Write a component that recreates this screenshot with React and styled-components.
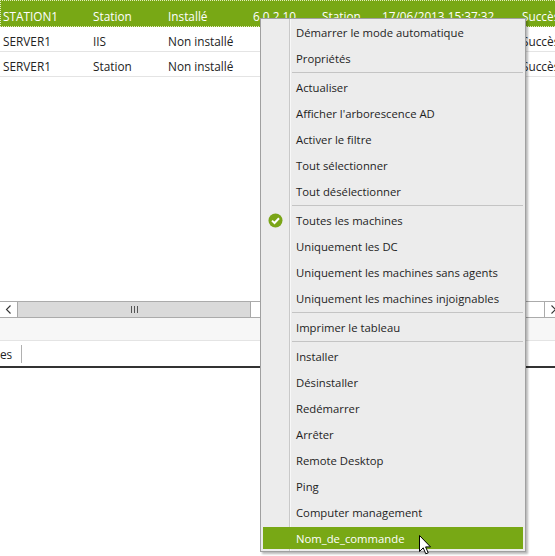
import React from "react";
import styled, { createGlobalStyle } from "styled-components";

const Global = createGlobalStyle`
  html, body { margin: 0; padding: 0; background: #fff; }
  body { font-family: "Open Sans", "Noto Sans", sans-serif; }
`;

const GREEN = "#78a815";

const Page = styled.div`
  position: relative;
  width: 555px;
  height: 556px;
  overflow: hidden;
  background: #fff;
  font-family: "Open Sans", "Noto Sans", sans-serif;
  font-size: 11.8px;
  color: #222;
`;

const Wide = styled.div`
  width: 561px;
`;

const RowsArea = styled.div`
  height: 301px;
`;

const Row = styled.div`
  display: grid;
  grid-template-columns: 90px 75px 85px 69px 60px 140px 1fr;
  height: ${(p) => (p.$first ? 27 : 25)}px;
  padding-top: ${(p) => (p.$first ? 2 : 0)}px;
  box-sizing: border-box;
  align-items: center;
  background: ${(p) => (p.$selected ? GREEN : "#fff")};
  color: ${(p) => (p.$selected ? "#fff" : "#222")};
  border-bottom: 1px solid ${(p) => (p.$selected ? GREEN : "#e4e4e4")};
  outline: ${(p) => (p.$selected ? "1px dotted rgba(255,255,230,0.8)" : "none")};
  outline-offset: -1px;
`;

const Cell = styled.div`
  padding-left: 3px;
  padding-top: 3px;
  white-space: nowrap;
  overflow: hidden;
`;

const HScroll = styled.div`
  display: flex;
  height: 17px;
  box-sizing: border-box;
  border-top: 1px solid #ababab;
  border-bottom: 1px solid #ababab;
  background: #fff;
`;

const ArrowBtn = styled.div`
  width: 17px;
  flex: none;
  display: flex;
  align-items: center;
  justify-content: center;
  background: #fff;
  border-left: ${(p) => (p.$right ? "1px solid #ababab" : "none")};
  box-sizing: border-box;
`;

const Thumb = styled.div`
  width: 234px;
  flex: none;
  background: #dadada;
  border: 1px solid #a8a8a8;
  border-top: none;
  border-bottom: none;
  box-sizing: border-box;
  display: flex;
  align-items: center;
  justify-content: center;
`;

const Track = styled.div`
  flex: 1;
`;

const Strip = styled.div`
  height: 22px;
  background: #f7f7f7;
  border-bottom: 1px solid #e4e4e4;
`;

const TabBar = styled.div`
  height: 25px;
  display: flex;
  align-items: center;
  border-bottom: 2px solid #333;
`;

const TabLabel = styled.div`
  padding-right: 9px;
  height: 18px;
  line-height: 18px;
  border-right: 1px solid #b0b0b0;
`;

const Menu = styled.div`
  position: absolute;
  left: 260px;
  top: 18px;
  width: 266px;
  box-sizing: border-box;
  display: flex;
  flex-direction: column;
  border: 1px solid #a0a0a0;
  padding: 0 2px;
  font-size: 11.3px;
  background:
    linear-gradient(
      to right,
      transparent 28px,
      #c9c9c9 28px,
      #c9c9c9 29px,
      #f8f8f8 29px,
      #f8f8f8 30px,
      transparent 30px
    ),
    #ececec;
  box-shadow: 2px 2px 2px rgba(0, 0, 0, 0.28);
  color: #1e1e1e;
`;

const Item = styled.div`
  position: relative;
  display: flex;
  align-items: center;
  height: 22px;
  flex: none;
  margin: 2px 0;
  background: ${(p) => (p.$active ? GREEN : "transparent")};
  color: ${(p) => (p.$active ? "#fff" : "#1e1e1e")};
  white-space: nowrap;
`;

const IconSlot = styled.span`
  width: 24px;
  flex: none;
  display: flex;
  align-items: center;
  justify-content: center;
  margin-right: 9px;
`;

const Sep = styled.div`
  height: 1px;
  flex: none;
  margin: 1px 0 1px 29px;
  background: #c4c4c4;
`;

const Cursor = styled.svg`
  position: absolute;
  left: 156px;
  top: 8px;
`;

const CheckIcon = () => (
  <svg width="15" height="15" viewBox="0 0 15 15">
    <circle cx="7.5" cy="7.5" r="7" fill="#7aa517" />
    <path d="M4 7.6 L6.5 10 L11 5.2" fill="none" stroke="#fff" strokeWidth="2" />
  </svg>
);

const Chevron = ({ right }) => (
  <svg width="7" height="9" viewBox="0 0 7 9">
    <path
      d={right ? "M1.5 0.5 L5.5 4.5 L1.5 8.5" : "M5.5 0.5 L1.5 4.5 L5.5 8.5"}
      fill="none"
      stroke="#333"
      strokeWidth="1.1"
    />
  </svg>
);

const Grip = () => (
  <svg width="7" height="7" viewBox="0 0 7 7">
    <rect x="0" y="0" width="1" height="7" fill="#555" />
    <rect x="3" y="0" width="1" height="7" fill="#555" />
    <rect x="6" y="0" width="1" height="7" fill="#555" />
  </svg>
);

const rows = [
  ["STATION1", "Station", "Installé", "6.0.2.10", "Station", "17/06/2013 15:37:32", "Succès"],
  ["SERVER1", "IIS", "Non installé", "", "", "", "Succès"],
  ["SERVER1", "Station", "Non installé", "", "", "", "Succès"],
];

const menu = [
  ["Démarrer le mode automatique", "Propriétés"],
  ["Actualiser", "Afficher l'arborescence AD", "Activer le filtre", "Tout sélectionner", "Tout désélectionner"],
  ["Toutes les machines", "Uniquement les DC", "Uniquement les machines sans agents", "Uniquement les machines injoignables"],
  ["Imprimer le tableau"],
  ["Installer", "Désinstaller", "Redémarrer", "Arrêter", "Remote Desktop", "Ping", "Computer management", "Nom_de_commande"],
];

export default function App() {
  return (
    <Page>
      <Global />
      <Wide>
        <RowsArea>
          {rows.map((r, i) => (
            <Row key={i} $first={i === 0} $selected={i === 0}>
              {r.map((c, j) => (
                <Cell key={j}>{c}</Cell>
              ))}
            </Row>
          ))}
        </RowsArea>
        <HScroll>
          <ArrowBtn>
            <Chevron />
          </ArrowBtn>
          <Thumb>
            <Grip />
          </Thumb>
          <Track />
          <ArrowBtn $right>
            <Chevron right />
          </ArrowBtn>
        </HScroll>
        <Strip />
        <TabBar>
          <TabLabel>es</TabLabel>
        </TabBar>
      </Wide>
      <Menu>
        {menu.map((group, gi) => (
          <React.Fragment key={gi}>
            {gi > 0 && <Sep />}
            {group.map((label) => (
              <Item key={label} $active={label === "Nom_de_commande"}>
                <IconSlot>{label === "Toutes les machines" && <CheckIcon />}</IconSlot>
                {label}
                {label === "Nom_de_commande" && (
                  <Cursor width="13" height="20" viewBox="0 0 13 20">
                    <path
                      d="M0.5 0.5 L0.5 16.5 L4.2 12.8 L6.8 18.8 L9.2 17.8 L6.6 11.9 L11.5 11.9 Z"
                      fill="#fff"
                      stroke="#000"
                      strokeWidth="1"
                      strokeLinejoin="round"
                    />
                  </Cursor>
                )}
              </Item>
            ))}
          </React.Fragment>
        ))}
      </Menu>
    </Page>
  );
}
